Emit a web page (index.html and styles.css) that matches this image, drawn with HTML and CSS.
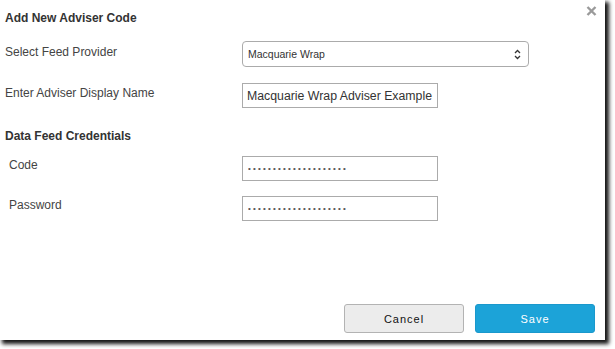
FILE: index.html
```html
<!DOCTYPE html>
<html lang="en">
<head>
<meta charset="utf-8">
<title>Add New Adviser Code</title>
<link rel="stylesheet" href="styles.css">
</head>
<body>
<div class="dialog">
  <button class="close" type="button" aria-label="Close">
    <svg width="11" height="10" viewBox="0 0 11 10"><path d="M1.5 1 L9.5 9 M9.5 1 L1.5 9" stroke="#9a9a9a" stroke-width="2.4" stroke-linecap="butt"/></svg>
  </button>
  <h1 class="title">Add New Adviser Code</h1>
  <div class="row row-provider">
    <label class="label" for="provider">Select Feed Provider</label>
    <div class="select-wrap">
      <select id="provider" class="select">
        <option>Macquarie Wrap</option>
      </select>
      <svg class="select-arrow" width="7" height="11" viewBox="0 0 7 11"><path d="M1 4 L3.5 1.5 L6 4 M1 7 L3.5 9.5 L6 7" fill="none" stroke="#333" stroke-width="1.3"/></svg>
    </div>
  </div>
  <div class="row row-name">
    <label class="label" for="dname">Enter Adviser Display Name</label>
    <input id="dname" class="text-input name-input" type="text" value="Macquarie Wrap Adviser Example">
  </div>
  <h2 class="section">Data Feed Credentials</h2>
  <div class="row row-code">
    <label class="label sub" for="code">Code</label>
    <input id="code" class="text-input pw-input" type="password" value="xxxxxxxxxxxxxxxxxxxx">
  </div>
  <div class="row row-pw">
    <label class="label sub" for="pw">Password</label>
    <input id="pw" class="text-input pw-input" type="password" value="xxxxxxxxxxxxxxxxxxxx">
  </div>
  <div class="footer">
    <button class="btn btn-cancel" type="button">Cancel</button>
    <button class="btn btn-save" type="button">Save</button>
  </div>
</div>
</body>
</html>
```
FILE: styles.css
```css
html, body {
  margin: 0;
  padding: 0;
  background: #fff;
}
body {
  font-family: "Liberation Sans", Arial, sans-serif;
  color: #333;
  width: 615px;
  height: 349px;
  overflow: hidden;
}
.dialog {
  position: relative;
  box-sizing: border-box;
  width: 605px;
  height: 340px;
  background: #fff;
  box-shadow: 3px 3px 4px 1px rgba(0, 0, 0, 0.92);
  padding: 10px 10px 7px 5px;
  display: flex;
  flex-direction: column;
}
.close {
  position: absolute;
  top: 6px;
  right: 8px;
  width: 11px;
  height: 10px;
  padding: 0;
  border: 0;
  background: none;
  display: block;
}
.close svg { display: block; }
.title {
  margin: 0;
  font-size: 12px;
  font-weight: 700;
  line-height: 16px;
  color: #333;
}
.section {
  margin: 20px 0 0;
  font-size: 12px;
  font-weight: 700;
  line-height: 16px;
  color: #333;
}
.row {
  display: grid;
  grid-template-columns: 237px auto;
  align-items: start;
}
.row-provider { margin-top: 15px; }
.row-name { margin-top: 16px; }
.row-code { margin-top: 12px; }
.row-pw { margin-top: 15px; }
.label {
  font-size: 12px;
  line-height: 16px;
  padding-top: 2px;
  color: #444;
}
.row-provider .label { padding-top: 3px; }
.label.sub { padding-left: 4px; padding-top: 1px; }
.select-wrap {
  position: relative;
  width: 287px;
  height: 26px;
}
.select {
  appearance: none;
  -webkit-appearance: none;
  box-sizing: border-box;
  width: 100%;
  height: 26px;
  margin: 0;
  border: 1px solid #ababab;
  border-radius: 4px;
  background: #fff;
  padding: 0 20px 0 5px;
  font-family: "Liberation Sans", Arial, sans-serif;
  font-size: 10.5px;
  color: #333;
  outline: none;
}
.select-arrow {
  position: absolute;
  right: 8px;
  top: 8px;
  pointer-events: none;
}
.text-input {
  box-sizing: border-box;
  width: 196px;
  height: 25px;
  margin: 0;
  border: 1px solid #ababab;
  border-radius: 0;
  background: #fff;
  padding: 0 4px;
  font-family: "Liberation Sans", Arial, sans-serif;
  color: #333;
  outline: none;
}
.name-input {
  font-size: 12.3px;
}
.pw-input {
  font-size: 8px;
  letter-spacing: 2.2px;
  padding-left: 5px;
  color: #555;
}
.footer {
  margin-top: auto;
  display: flex;
  justify-content: flex-end;
  gap: 11px;
}
.btn {
  box-sizing: border-box;
  width: 120px;
  height: 29px;
  border-radius: 3px;
  font-family: "Liberation Sans", Arial, sans-serif;
  font-size: 11px;
  letter-spacing: 1px;
  padding: 0;
  margin: 0;
}
.btn-cancel {
  background: #ececec;
  border: 1px solid #b3b3b3;
  color: #111;
}
.btn-save {
  background: #1ca3d8;
  border: 1px solid #1a98cc;
  color: #fff;
}
```
